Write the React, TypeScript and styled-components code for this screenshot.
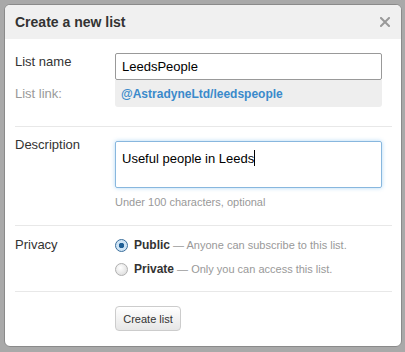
import styled, { createGlobalStyle } from "styled-components";

const GlobalStyle = createGlobalStyle`
    html, body {
        margin: 0;
        padding: 0;
        background: #a9a9a9;
        font-family: "Liberation Sans", Arial, sans-serif;
    }
`

const Page = styled.div`
    width: 405px;
    height: 352px;
    padding: 4px 0 0 4px;
    box-sizing: border-box;
`

const Dialog = styled.div`
    width: 398px;
    height: 343px;
    box-sizing: border-box;
    background: #fff;
    border: 1px solid #8a8a8a;
    border-radius: 6px;
    overflow: hidden;
    display: flex;
    flex-direction: column;
`

const Header = styled.div`
    height: 34px;
    background: #f0f0f0;
    display: flex;
    align-items: center;
    justify-content: space-between;
    padding: 0 10px 0 10px;
    flex-shrink: 0;
`

const Title = styled.h3`
    margin: 0;
    font-size: 14px;
    font-weight: bold;
    color: #333;
`

const Close = styled.svg`
    width: 10px;
    height: 10px;
    margin-right: 1px;
`

const Body = styled.div`
    padding: 0 9px 0 10px;
`

const Section = styled.div<{ top: number; bottom: number; last?: boolean }>`
    display: grid;
    grid-template-columns: 100px 267px;
    padding: ${p => `${p.top}px 0 ${p.bottom}px`};
    border-bottom: ${p => p.last ? "none" : "1px solid #e8e8e8"};
`

const Label = styled.div<{ muted?: boolean }>`
    font-size: 13px;
    line-height: 16px;
    color: ${p => p.muted ? "#999" : "#333"};
    padding-top: 1px;
`

const LinkLabel = styled(Label)`
    margin-top: 15px;
`

const Field = styled.div<{ offset?: number }>`
    display: flex;
    flex-direction: column;
    margin-top: ${p => p.offset ?? 0}px;
`

const TextInput = styled.div`
    height: 27px;
    box-sizing: border-box;
    border: 1px solid #999;
    border-radius: 2px;
    padding: 0 6px;
    font-size: 13px;
    color: #000;
    display: flex;
    align-items: center;
    background: #fff;
`

const LinkBox = styled.div`
    height: 27px;
    box-sizing: border-box;
    background: #eeeeee;
    border-radius: 0 0 3px 3px;
    padding: 0 6px;
    display: flex;
    align-items: center;
    font-size: 12px;
    font-weight: bold;
    color: #3a8acb;
`

const TextArea = styled.div`
    height: 47px;
    box-sizing: border-box;
    border: 1px solid #88b7de;
    border-radius: 2px;
    box-shadow: 0 0 4px rgba(82, 168, 236, 0.45);
    padding: 8px 6px;
    font-size: 13px;
    color: #000;
`

const Caret = styled.span`
    display: inline-block;
    width: 1px;
    height: 16px;
    background: #000;
    vertical-align: -3px;
`

const Hint = styled.div`
    font-size: 11px;
    line-height: 13px;
    color: #999;
    margin-top: 8px;
`

const Radios = styled.div`
    display: flex;
    flex-direction: column;
    gap: 8px;
    padding-top: 1px;
`

const RadioRow = styled.div`
    display: flex;
    align-items: center;
    gap: 6px;
    height: 16px;
    font-size: 11px;
    color: #999;
    padding-left: 0px;
`

const Radio = styled.span<{ checked?: boolean }>`
    width: 11px;
    height: 11px;
    border-radius: 50%;
    border: 1px solid ${p => p.checked ? "#3a6e9c" : "#b0b0b0"};
    background: ${p => p.checked
        ? "radial-gradient(circle, #1f5f96 0 2.5px, #cfe4f5 3px)"
        : "radial-gradient(circle at 40% 35%, #fff, #d6d6d6)"};
    flex-shrink: 0;
`

const Strong = styled.b`
    color: #333;
    font-size: 12px;
`

const Button = styled.button`
    width: 66px;
    height: 25px;
    border: 1px solid #ccc;
    border-radius: 4px;
    background: linear-gradient(#fff, #e6e6e6);
    font-family: inherit;
    font-size: 11px;
    color: #333;
    padding: 0;
`

export default function App() {
    return (
        <Page>
            <GlobalStyle />
            <Dialog>
                <Header>
                    <Title>Create a new list</Title>
                    <Close viewBox="0 0 10 10">
                        <path d="M1 1 L9 9 M9 1 L1 9" stroke="#999" strokeWidth="2" strokeLinecap="square" />
                    </Close>
                </Header>
                <Body>
                    <Section top={14} bottom={19}>
                        <div>
                            <Label>List name</Label>
                            <LinkLabel muted>List link:</LinkLabel>
                        </div>
                        <Field>
                            <TextInput>LeedsPeople</TextInput>
                            <LinkBox>@AstradyneLtd/leedspeople</LinkBox>
                        </Field>
                    </Section>
                    <Section top={9} bottom={16}>
                        <Label>Description</Label>
                        <Field offset={5}>
                            <TextArea>Useful people in Leeds<Caret /></TextArea>
                            <Hint>Under 100 characters, optional</Hint>
                        </Field>
                    </Section>
                    <Section top={10} bottom={14}>
                        <Label>Privacy</Label>
                        <Radios>
                            <RadioRow>
                                <Radio checked />
                                <span><Strong>Public</Strong> — Anyone can subscribe to this list.</span>
                            </RadioRow>
                            <RadioRow>
                                <Radio />
                                <span><Strong>Private</Strong> — Only you can access this list.</span>
                            </RadioRow>
                        </Radios>
                    </Section>
                    <Section top={14} bottom={0} last>
                        <div />
                        <div>
                            <Button>Create list</Button>
                        </div>
                    </Section>
                </Body>
            </Dialog>
        </Page>
    )
}
